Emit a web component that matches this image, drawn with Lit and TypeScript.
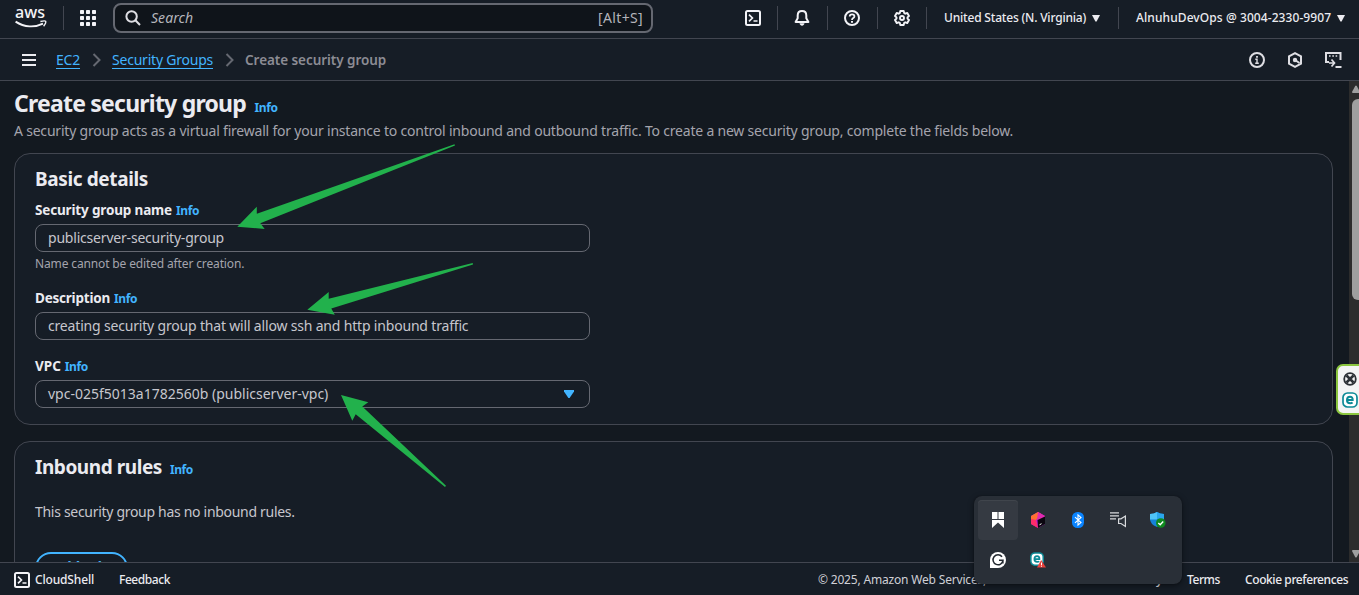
import { LitElement, html, css, svg } from "lit";
import { customElement } from "lit/decorators.js";

const chevron = html`<svg class="chev" width="10" height="16" viewBox="0 0 10 16"><path d="M1.5 2 7.5 8 1.5 14" fill="none" stroke="#656871" stroke-width="2"/></svg>`;
const caret = html`<svg width="8" height="7" viewBox="0 0 8 7"><path d="M0 0H8L4.6 6.4H3.4Z" fill="#ebebf0"/></svg>`;
const terminal = html`<svg width="16" height="16" viewBox="0 0 16 16" fill="none" stroke="#f3f3f7" stroke-width="2"><rect x="1" y="1" width="14" height="14" rx="1.5"/><path d="M4 4.6 7.4 8 4 11.4M8.5 11H12.5" stroke-width="1.7"/></svg>`;
const eset = svg`<rect x="1" y="1" width="14" height="14" rx="4.5" fill="#fff" stroke="#0c8a96" stroke-width="1.7"/><path d="M5.2 8.1H10.7C10.9 5.9 9.8 4.7 8 4.7 6.1 4.7 5 6 5 8c0 2.1 1.2 3.3 3.2 3.3 1 0 1.8-.2 2.4-.7" fill="none" stroke="#0c8a96" stroke-width="2"/>`;

@customElement("app-root")
export class AppRoot extends LitElement {
  static styles = css`
    :host { display: block; width: 1359px; height: 595px; overflow: hidden; position: relative; background: #131920; color: #ebebf0; font: 400 14px/20px "Noto Sans", "Open Sans", sans-serif; }
    * { box-sizing: border-box; }
    svg { display: block; flex: none; }
    .page { display: flex; flex-direction: column; height: 595px; white-space: nowrap; }
    .top { height: 39px; flex: none; background: #161d26; border-bottom: 1px solid #424650; display: flex; align-items: flex-start; padding-left: 15px; }
    .logo { width: 33px; height: 36px; }
    .logo text { font: 500 15.5px "Noto Sans", sans-serif; }
    .div { width: 1px; height: 24px; margin-top: 6px; background: #424650; flex: none; }
    .div.first { margin-left: 15px; }
    .div.low { height: 22px; margin-top: 7px; }
    .apps { margin: 10px 17px 0 16px; }
    .search { width: 540px; height: 30px; margin-top: 3px; border: 2px solid #656871; border-radius: 8px; background: #0f141a; display: flex; align-items: center; padding: 0 8px 0 10px; color: #b4b4bb; }
    .search i { margin-left: 10px; flex: 1; letter-spacing: .05px; }
    .search span { letter-spacing: .35px; }
    .ti { margin-top: 10px; }
    .g1 { margin-left: 92px; margin-right: 16px; }
    .g { margin-left: 16px; margin-right: 17px; }
    .gear { margin-right: 16px; }
    .nav { display: flex; align-items: center; height: 36px; font-size: 12px; font-weight: 500; gap: 6px; }
    .region { margin-left: 17px; margin-right: 18px; letter-spacing: -.19px; }
    .acct { margin-left: 17px; letter-spacing: .08px; }
    .crumbs { height: 42px; flex: none; background: #161d26; border-bottom: 1px solid #424650; display: flex; align-items: center; padding: 0 17px 0 22px; }
    .crumbs a { color: #42b4ff; border-bottom: 1px solid #42b4ff; height: 19px; line-height: 19px; }
    .ec2 { margin-left: 20px; letter-spacing: -.2px; }
    .sgs { letter-spacing: -.22px; }
    .chev { margin: 0 10px 0 12px; }
    .here { flex: 1; color: #8c8c94; font-weight: 600; font-size: 13.5px; letter-spacing: -.06px; }
    .tools { display: flex; gap: 22px; }
    .mid { flex: 1; min-height: 0; display: flex; overflow: hidden; }
    .main { flex: 1; padding: 7px 16px 0 14px; overflow: hidden; }
    .title { display: flex; align-items: baseline; height: 31px; }
    h1, h2 { margin: 0; font-weight: 700; }
    h1 { font-size: 23px; line-height: 30px; letter-spacing: -.78px; }
    h2 { font-size: 19px; line-height: 24px; letter-spacing: -.38px; }
    .info { color: #42b4ff; font-size: 12px; font-weight: 700; letter-spacing: -.4px; margin-left: 4px; }
    .title .info { margin-left: 8.5px; }
    .desc { margin-top: 2px; color: #a4a4ad; letter-spacing: -.206px; }
    .card { border: 1px solid #424650; border-radius: 16px; background: #161d26; padding: 13px 20px 16px; margin-top: 12px; color: #c6c6cd; }
    .card + .card { margin-top: 16px; height: 200px; }
    .card h2 { color: #ebebf0; }
    .label { height: 20px; display: flex; align-items: baseline; color: #ebebf0; font-weight: 700; font-size: 13.5px; margin-top: 16px; }
    .l1 { margin-top: 9px; letter-spacing: -.16px; }
    .l2 { margin-top: 14px; letter-spacing: -.22px; }
    .field { width: 555px; height: 28px; margin-top: 4px; border: 1px solid #656871; border-radius: 8px; padding: 0 15px 0 12px; display: flex; align-items: center; justify-content: space-between; }
    .f1 { letter-spacing: -.2px; }
    .f2 { letter-spacing: -.18px; }
    .f3 { letter-spacing: 0; }
    .hint { margin-top: 2px; font-size: 12px; color: #a4a4ad; letter-spacing: -.14px; }
    .head { display: flex; align-items: baseline; height: 24px; }
    .head h2 { letter-spacing: -.44px; }
    .head .info { margin-left: 8px; }
    .none { margin-top: 23px; letter-spacing: -.3px; }
    .btn { margin-top: 30px; width: 93px; height: 32px; border: 2px solid #42b4ff; border-radius: 16px; color: #42b4ff; font-weight: 700; text-align: center; line-height: 25px; letter-spacing: -.36px; }
    .bar { width: 10px; background: #2c2c2c; display: flex; flex-direction: column; overflow: hidden; padding-left: 3px; }
    .thumb { width: 12px; height: 201px; margin-top: 5px; border-radius: 6px; background: #9f9f9f; }
    .up { margin-top: 4px; margin-bottom: 1px; }
    .down { margin-top: auto; margin-bottom: 4px; }
    .foot { height: 33px; flex: none; background: #161d26; border-top: 1px solid #424650; display: flex; align-items: center; padding: 1px 11px 0 14px; font-size: 12px; font-weight: 500; }
    .cs { margin-left: 5px; width: 84px; letter-spacing: -.16px; }
    .fb { flex: 1; letter-spacing: -.44px; }
    .copy { font-weight: 400; color: #d0d0d6; letter-spacing: -.18px; width: 302px; }
    .priv { width: 67px; text-align: right; padding-right: 25px; letter-spacing: -.3px; }
    .terms { width: 58px; letter-spacing: -.42px; }
    .cookie { width: 103px; letter-spacing: -.41px; }
    .arrows { position: absolute; left: 0; top: 0; pointer-events: none; }
    .tray { position: absolute; left: 974px; top: 496px; width: 208px; height: 88px; border-radius: 8px; background: #292f37; box-shadow: 0 2px 6px #0007, 0 0 1px #0008; padding: 4px; display: grid; grid-template-columns: repeat(5, 40px); grid-template-rows: 40px 40px; }
    .cell { display: grid; place-items: center; border-radius: 4px; }
    .cell.on { background: #353a42; box-shadow: inset 0 1px #40454c; }
    .side { position: absolute; left: 1336px; top: 364px; width: 30px; height: 51px; border: 2px solid #8cc63f; border-radius: 7px; background: #f4f4f4; padding: 6px 0 0 5px; display: flex; flex-direction: column; gap: 6px; }
    .side .e { margin-left: -1px; }
  `;

  render() {
    return html`
      <div class="page">
        <header class="top">
          <svg class="logo" viewBox="0 0 33 36"><text x="0" y="18.4" textLength="30" lengthAdjust="spacingAndGlyphs" fill="#f3f3f7">aws</text><path d="M.6 21.6C9.5 27.6 20 27.6 28 23.6" fill="none" stroke="#f3f3f7" stroke-width="1.9"/><path d="M25.4 21.5C28 20.8 30.2 20.7 30.6 21.2 31 21.9 30.2 24.3 28.6 26.2" fill="none" stroke="#f3f3f7" stroke-width="1.4"/></svg>
          <div class="div first"></div>
          <svg class="apps" width="16" height="16" viewBox="0 0 16 16" fill="#f3f3f7">${[0, 6, 12].map(y => [0, 6, 12].map(x => svg`<rect x=${x} y=${y} width="4" height="4" rx=".7"/>`))}</svg>
          <div class="search">
            <svg width="16" height="16" viewBox="0 0 16 16" fill="none" stroke="#dedee3" stroke-width="2"><circle cx="6.6" cy="6.5" r="5.2"/><path d="M10.4 10.3 15 15"/></svg>
            <i>Search</i><span>[Alt+S]</span>
          </div>
          <div class="ti g1">${terminal}</div>
          <div class="div"></div>
          <svg class="ti g" width="16" height="16" viewBox="0 0 16 16" fill="none" stroke="#f3f3f7" stroke-width="2" stroke-linejoin="round"><path d="M8 1C5.2 1 3.7 3 3.7 5.4V8.3L1.6 12H14.4L12.3 8.3V5.4C12.3 3 10.8 1 8 1Z"/><path d="M5.5 13.2C6 16.5 10 16.5 10.5 13.2Z" fill="#f3f3f7" stroke="none"/></svg>
          <div class="div"></div>
          <svg class="ti g" width="16" height="16" viewBox="0 0 16 16" fill="none" stroke="#f3f3f7" stroke-width="2"><circle cx="8" cy="8" r="7"/><path d="M5.7 6.5C5.7 3.7 10.4 3.8 10.4 6.4 10.4 8.2 8 8 8 10" stroke-width="1.8"/><path d="M8 11V12.8"/></svg>
          <div class="div low"></div>
          <svg class="ti g gear" width="16" height="16" viewBox="0 0 16 16" fill="none" stroke="#f3f3f7" stroke-width="1.9" stroke-linejoin="round"><path d="M6.3 1H9.7L10.2 3.1 11.3 3.7 13.3 3 15 6 13.5 7.4V8.6L15 10 13.3 13 11.3 12.3 10.2 12.9 9.7 15H6.3L5.8 12.9 4.7 12.3 2.7 13 1 10 2.5 8.6V7.4L1 6 2.7 3 4.7 3.7 5.8 3.1Z"/><circle cx="8" cy="8" r="2"/></svg>
          <div class="div low"></div>
          <div class="nav region"><span>United States (N. Virginia)</span>${caret}</div>
          <div class="div low"></div>
          <div class="nav acct"><span>AlnuhuDevOps @ 3004-2330-9907</span>${caret}</div>
        </header>

        <nav class="crumbs">
          <svg width="14" height="12" viewBox="0 0 14 12" fill="#ebebf0"><path d="M0 0H14V2H0ZM0 5H14V7H0ZM0 10H14V12H0Z"/></svg>
          <a class="ec2">EC2</a>${chevron}<a class="sgs">Security Groups</a>${chevron}<span class="here">Create security group</span>
          <div class="tools">
            <svg width="16" height="16" viewBox="0 0 16 16" fill="none" stroke="#dedee3" stroke-width="2"><circle cx="8" cy="8" r="7"/><path d="M6.3 7.3H8V11.6M6.2 11.2H9.8" stroke-width="1.4"/><path d="M8 4V5.8" stroke-width="1.8"/></svg>
            <svg width="16" height="16" viewBox="0 0 16 16" fill="none" stroke="#dedee3" stroke-width="2"><path d="M8 1.2 14 4.4V11.6L8 14.8 2 11.6V4.4Z"/><circle cx="8" cy="8" r="2.2" fill="#dedee3" stroke="none"/><path d="M8 8 12.5 11"/></svg>
            <svg width="17" height="16" viewBox="0 0 17 16" fill="none" stroke="#dedee3" stroke-width="2"><path d="M4 10H1V1H15.5V8"/><path d="M4 4H5.6M7.3 4H8.9M10.6 4H12.2" stroke-width="1.6"/><path d="M4 11H9M6.5 7.5 9.5 11 6.5 14.5" stroke-width="1.7"/><path d="M10.5 15H16.5"/></svg>
          </div>
        </nav>

        <div class="mid">
          <main class="main">
            <div class="title"><h1>Create security group</h1><span class="info">Info</span></div>
            <div class="desc">A security group acts as a virtual firewall for your instance to control inbound and outbound traffic. To create a new security group, complete the fields below.</div>
            <section class="card">
              <h2>Basic details</h2>
              <div class="label l1">Security group name<span class="info">Info</span></div>
              <div class="field f1">publicserver-security-group</div>
              <div class="hint">Name cannot be edited after creation.</div>
              <div class="label l2">Description<span class="info">Info</span></div>
              <div class="field f2">creating security group that will allow ssh and http inbound traffic</div>
              <div class="label">VPC<span class="info">Info</span></div>
              <div class="field f3"><span>vpc-025f5013a1782560b (publicserver-vpc)</span><svg width="10" height="8" viewBox="0 0 10 8"><path d="M0 0H10V1.5L5.6 8H4.4L0 1.5Z" fill="#42b4ff"/></svg></div>
            </section>
            <section class="card">
              <div class="head"><h2>Inbound rules</h2><span class="info">Info</span></div>
              <div class="none">This security group has no inbound rules.</div>
              <div class="btn">Add rule</div>
            </section>
          </main>
          <div class="bar">
            <svg class="up" width="12" height="8" viewBox="0 0 12 8"><path d="M0 7 3.2 1Q4 0 4.8 1L8 7Q8 8 7 8H1Q0 8 0 7Z" fill="#9f9f9f"/></svg>
            <div class="thumb"></div>
            <svg class="down" width="12" height="8" viewBox="0 0 12 8"><path d="M0 1 3.2 7Q4 8 4.8 7L8 1Q8 0 7 0H1Q0 0 0 1Z" fill="#9f9f9f"/></svg>
          </div>
        </div>

        <footer class="foot">
          ${terminal}<span class="cs">CloudShell</span><span class="fb">Feedback</span>
          <span class="copy">© 2025, Amazon Web Services, Inc. or its affiliates.</span>
          <span class="priv">Privacy</span><span class="terms">Terms</span><span class="cookie">Cookie preferences</span>
        </footer>
      </div>

      <svg class="arrows" width="1359" height="595" viewBox="0 0 1359 595" fill="#22b14c">
        <path d="M237.3 226.7 256.8 206.7V213.7L454.5 144.3 455 145.6 260.3 223.3 264.7 229Z"/>
        <path d="M307.3 309.7 328.7 292V298.7L472.7 263 473 264.4 331.3 308.4 334.8 314.7Z"/>
        <path d="M341 395 368.3 402.3 362.3 406.4 446 485.7 445 487 355.7 414.3 352.3 420.8Z"/>
      </svg>

      <aside class="side">
        <svg width="14" height="14" viewBox="0 0 14 14"><circle cx="7" cy="7" r="5.8" fill="#f4f4f4" stroke="#2d3136" stroke-width="1.8"/><path d="M3.5 3.5 10.5 10.5M10.5 3.5 3.5 10.5" stroke="#2d3136" stroke-width="2.6"/></svg>
        <svg class="e" width="16" height="16" viewBox="0 0 16 16">${eset}</svg>
      </aside>

      <div class="tray">
        <div class="cell on"><svg width="12" height="16" viewBox="0 0 12 16" fill="#fff"><path d="M0 0H5.5V7H0ZM6.5 0H12V7H6.5ZM0 8H12V16L6 10.5 0 16Z"/></svg></div>
        <div class="cell"><svg width="14" height="16" viewBox="0 0 14 16"><path d="M0 4 7 0 14 4V12L7 16 0 12Z" fill="#c31bd6"/><path d="M0 4 7 0 10 2 5 8 0 11Z" fill="#ff7130"/><path d="M7 0 14 4V8L6 8Z" fill="#e02bb0"/><path d="M0 7 5 8 7 16 0 12Z" fill="#fc2c6a"/><path d="M6.5 8 14 4.5V12L7 16Z" fill="#0b0710"/><path d="M8.5 12.8 10.5 11.7" stroke="#fff"/></svg></div>
        <div class="cell"><svg width="12" height="16" viewBox="0 0 12 16"><rect width="12" height="16" rx="5.5" fill="#0a84ff"/><path d="M3 5.2 9 10.6 6 13V3L9 5.4 3 10.8" fill="none" stroke="#fff" stroke-width="1.1"/></svg></div>
        <div class="cell"><svg width="16" height="16" viewBox="0 0 16 16" fill="none" stroke="#d8dadd"><path d="M0 .8H9M0 3.8H9M0 6.8H6" stroke-width="1.2"/><path d="M8.6 6.8H11L15.4 4V14.4L11 11.5H8.6Z" stroke-width="1.2"/></svg></div>
        <div class="cell"><svg width="16" height="16" viewBox="0 0 16 16"><path d="M7 0Q10 2 14 2V7Q14 12 7 15 0 12 0 7V2Q4 2 7 0Z" fill="#1683d8"/><path d="M7 0V7.5H0V2Q4 2 7 0Z" fill="#4fc5f7"/><path d="M7 0Q10 2 14 2V7.5H7Z" fill="#2aa5ec"/><circle cx="10.8" cy="11" r="4.8" fill="#0f8a1f"/><path d="M8.3 11 10.2 12.8 13.2 9.6" fill="none" stroke="#fff" stroke-width="1.4"/></svg></div>
        <div class="cell"><svg width="16" height="16" viewBox="0 0 16 16"><path d="M8 0A8 8 0 1 1 8 16H0V8A8 8 0 0 1 8 0Z" fill="#fff"/><path d="M12 4.7A5 5 0 1 0 13 8.3H9M12.9 8.2V11.5" fill="none" stroke="#22282f" stroke-width="1.5"/></svg></div>
        <div class="cell"><svg width="16" height="16" viewBox="0 0 16 16"><g transform="translate(0 0) scale(.88)">${eset}</g><path d="M11.2 8 16 15.5H7Z" fill="#e8413c"/><path d="M11.5 10.5V13M11.5 13.7V14.7" stroke="#fff"/></svg></div>
      </div>
    `;
  }
}
